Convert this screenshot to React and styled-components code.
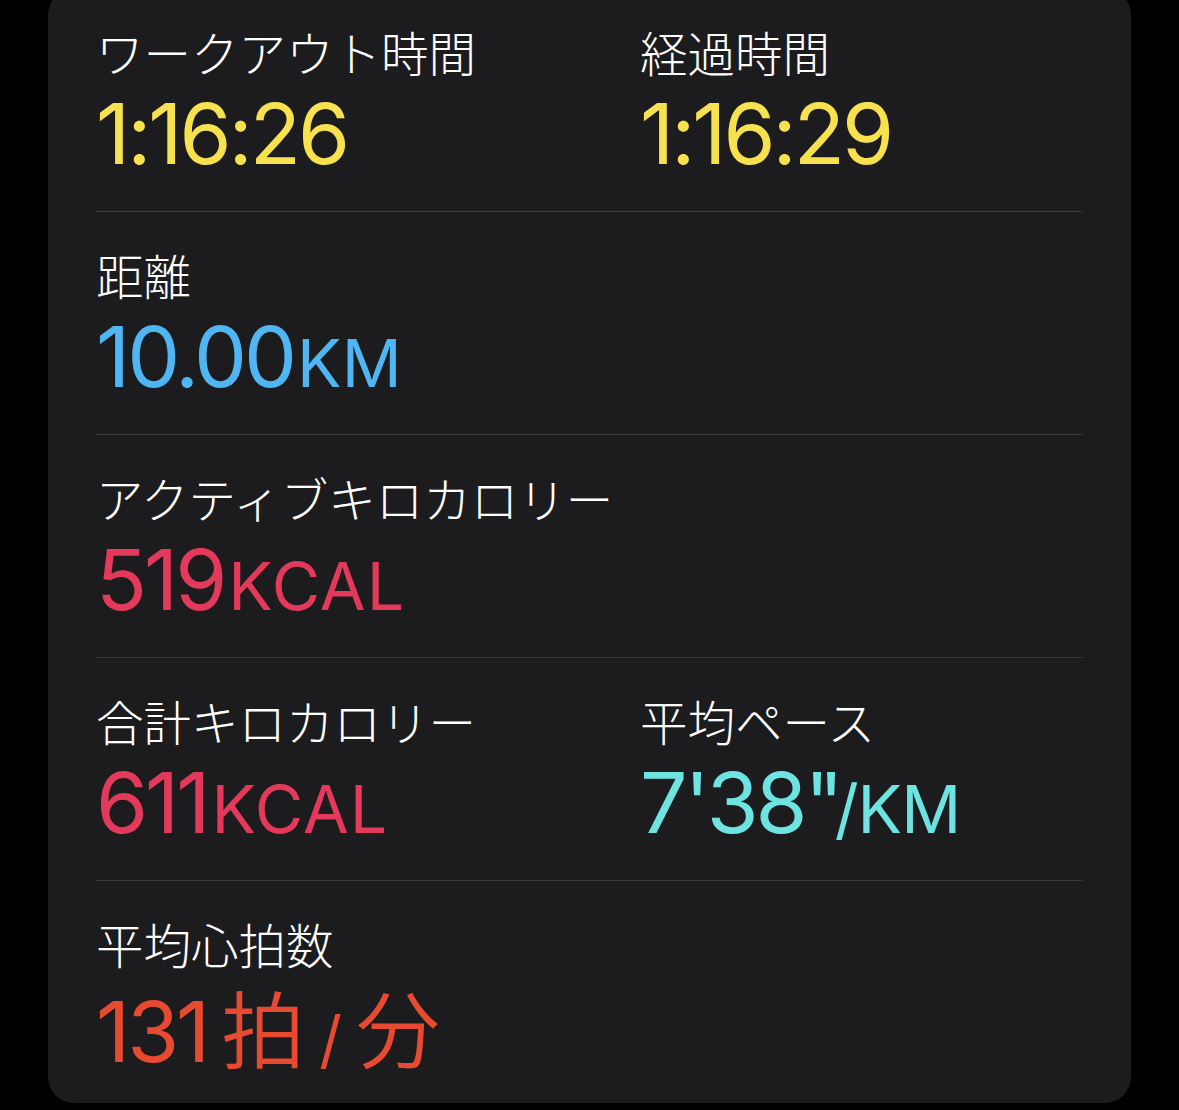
import React from "react";
import styled, { createGlobalStyle } from "styled-components";

const Global = createGlobalStyle`
  html, body { margin: 0; padding: 0; background: #000; }
  body { overflow: hidden; }
  * { box-sizing: border-box; }
`;

const Page = styled.div`
  width: 1179px;
  height: 1110px;
  background: #000;
  padding: 0 48px;
  overflow: hidden;
`;

const Card = styled.div`
  margin-top: -11px;
  background: #1c1c1e;
  border-radius: 26px;
  padding: 0 48px;
  display: flex;
  flex-direction: column;
`;

const Row = styled.div`
  height: 222px;
  display: grid;
  grid-template-columns: 544px 1fr;
  padding-top: 35px;
  & + & {
    border-top: 1px solid #3a3a3c;
    height: 223px;
  }
`;

const Metric = styled.div`
  display: flex;
  flex-direction: column;
`;

const Label = styled.div`
  font-family: "Noto Sans CJK JP", "Noto Sans", sans-serif;
  font-weight: 300;
  font-size: 47.5px;
  line-height: 56px;
  color: #fff;
  white-space: nowrap;
`;

const Value = styled.div`
  margin-top: 4px;
  font-family: Inter, "Noto Sans CJK JP", sans-serif;
  font-weight: 400;
  font-size: 84px;
  line-height: 100px;
  color: ${(p) => p.$color};
  white-space: nowrap;
  letter-spacing: -3px;
`;

const Unit = styled.span`
  font-size: 0.79em;
  letter-spacing: ${(p) => p.$spacing || "0px"};
  margin-left: ${(p) => p.$gap || "0px"};
`;

const CjkUnit = styled.span`
  font-family: "Noto Sans CJK JP", sans-serif;
  font-weight: 350;
  letter-spacing: 0;
  margin-left: ${(p) => p.$gap || "0px"};
`;

const Slash = styled.span`
  font-family: Inter, sans-serif;
  font-size: 0.75em;
  letter-spacing: 0;
  margin: 0 14px 0 14px;
`;

const YELLOW = "#f7e14f";
const BLUE = "#4fb5f3";
const RED = "#e3395a";
const CYAN = "#6ee4e2";
const ORANGE = "#e84a31";

export default function App() {
  return (
    <Page>
      <Global />
      <Card>
        <Row>
          <Metric>
            <Label>ワークアウト時間</Label>
            <Value $color={YELLOW}>1:16:26</Value>
          </Metric>
          <Metric>
            <Label>経過時間</Label>
            <Value $color={YELLOW}>1:16:29</Value>
          </Metric>
        </Row>
        <Row>
          <Metric>
            <Label>距離</Label>
            <Value $color={BLUE}>
              10.00<Unit $gap="3px">KM</Unit>
            </Value>
          </Metric>
        </Row>
        <Row>
          <Metric>
            <Label>アクティブキロカロリー</Label>
            <Value $color={RED}>
              519<Unit $spacing="1px" $gap="4px">KCAL</Unit>
            </Value>
          </Metric>
        </Row>
        <Row>
          <Metric>
            <Label>合計キロカロリー</Label>
            <Value $color={RED}>
              611<Unit $spacing="1px" $gap="4px">KCAL</Unit>
            </Value>
          </Metric>
          <Metric>
            <Label>平均ペース</Label>
            <Value $color={CYAN}>
              7'38"<Unit $gap="-6px" $spacing="-1px">/KM</Unit>
            </Value>
          </Metric>
        </Row>
        <Row>
          <Metric>
            <Label>平均心拍数</Label>
            <Value $color={ORANGE}>
              131<CjkUnit $gap="14px">拍</CjkUnit>
              <Slash>/</Slash>
              <CjkUnit>分</CjkUnit>
            </Value>
          </Metric>
        </Row>
      </Card>
    </Page>
  );
}
